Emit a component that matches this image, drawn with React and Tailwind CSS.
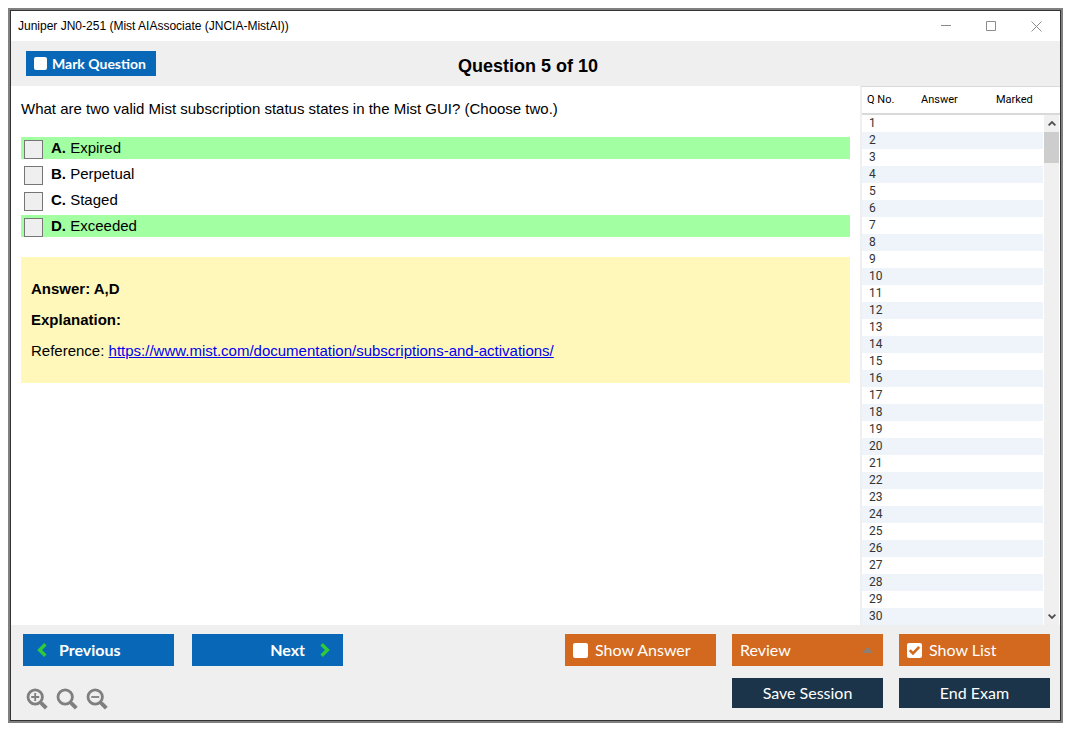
import { useState } from 'react';

const options = [
  { letter: 'A', text: 'Expired', correct: true },
  { letter: 'B', text: 'Perpetual', correct: false },
  { letter: 'C', text: 'Staged', correct: false },
  { letter: 'D', text: 'Exceeded', correct: true },
];

const rows = Array.from({ length: 30 }, (_, i) => i + 1);

const WindowButtons = () => (
  <div className="flex items-center gap-[35px] pr-[18px] text-[#8c8c8c]">
    <button type="button" aria-label="Minimize">
      <svg width="10" height="10" viewBox="0 0 10 10" stroke="currentColor"><path d="M0 4.5h10" /></svg>
    </button>
    <button type="button" aria-label="Maximize">
      <svg width="10" height="10" viewBox="0 0 10 10" fill="none" stroke="currentColor"><path d="M.5.5h9v9h-9z" /></svg>
    </button>
    <button type="button" aria-label="Close">
      <svg width="11" height="11" viewBox="0 0 11 11" stroke="currentColor"><path d="M.5.5l10 10M10.5.5l-10 10" /></svg>
    </button>
  </div>
);

const CheckButton = ({ label, className, boxClass, checked, onChange }) => (
  <label className={`flex items-center ${className}`}>
    <span className="grid place-items-center">
      <input
        type="checkbox"
        checked={checked}
        onChange={(e) => onChange(e.target.checked)}
        className={`col-start-1 row-start-1 appearance-none rounded-xs bg-white ${boxClass}`}
      />
      {checked && (
        <svg className="pointer-events-none col-start-1 row-start-1" width="11" height="9" viewBox="0 0 11 9" fill="none" stroke="#d2691e" strokeWidth="2.6">
          <path d="M.8 4.2l3.2 3.2L10.2 1" />
        </svg>
      )}
    </span>
    {label}
  </label>
);

const ZoomButton = ({ label, mark }) => (
  <button type="button" aria-label={label} className="text-[#7f7f7f]">
    <svg width="22" height="22" viewBox="0 0 22 22" fill="none" stroke="currentColor">
      <circle cx="9.2" cy="9" r="7.2" strokeWidth="2.8" />
      <path d="M14.2 14l1.6 1.6" strokeWidth="2.6" />
      <path d="M15.3 15.1l5 5" strokeWidth="4" />
      {mark && <path d={mark} strokeWidth="1.8" />}
    </svg>
  </button>
);

const Question = () => (
  <main className="flex-1 px-[10px] pt-[14px] text-[15px] leading-[18px]">
    <p>What are two valid Mist subscription status states in the Mist GUI? (Choose two.)</p>
    <div className="mt-[19px] flex flex-col gap-1">
      {options.map((o) => (
        <label key={o.letter} className={`flex h-[22px] items-start pl-[3px] ${o.correct ? 'bg-[#a2ffa2]' : ''}`}>
          <input type="checkbox" className="mt-[3px] mr-2 size-[19px] appearance-none border border-[#767676] bg-[#efefef] checked:bg-[#767676]" />
          <span className="pt-[2px]">
            <b>{o.letter}.</b> {o.text}
          </span>
        </label>
      ))}
    </div>
    <section className="mt-5 flex flex-col gap-[13px] bg-[#fff8ba] px-[10px] py-[23px]">
      <p className="font-bold">Answer: A,D</p>
      <p className="font-bold">Explanation:</p>
      <p>
        Reference:{' '}
        <a href="https://www.mist.com/documentation/subscriptions-and-activations/" className="text-[#0000ee] underline">
          https://www.mist.com/documentation/subscriptions-and-activations/
        </a>
      </p>
    </section>
  </main>
);

const QuestionList = () => (
  <aside className="relative w-[200px] shrink-0 border-t border-l-2 border-t-[#d9d9d9] border-l-[#efefef] font-['Roboto',sans-serif] text-[#333]">
    <table className="w-full table-fixed border-collapse text-[11px]">
      <thead>
        <tr className="h-[27px] border-b-2 border-[#d9d9d9] text-left text-black">
          <th className="w-[59px] pl-[5px] font-normal">Q No.</th>
          <th className="w-[75px] font-normal">Answer</th>
          <th className="font-normal">Marked</th>
        </tr>
      </thead>
      <tbody className="text-xs leading-[17px]">
        {rows.map((n) => (
          <tr key={n} className="h-[17px] even:bg-[#eef4f9]">
            <td className="p-0 pl-[7px]">{n}</td>
            <td className="p-0" />
            <td className="p-0" />
          </tr>
        ))}
      </tbody>
    </table>
    {/* Scrollbar */}
    <div className="absolute top-[28px] right-0 bottom-0 flex w-[17px] flex-col items-center border-r border-l border-white bg-[#f0f0f0] text-[#505050]">
      <svg className="my-[6px]" width="8" height="5" viewBox="0 0 8 5" fill="none" stroke="currentColor" strokeWidth="1.8"><path d="M.6 4.4L4 1l3.4 3.4" /></svg>
      <div className="h-[31px] w-full bg-[#cdcdcd]" />
      <svg className="mt-auto mb-[6px]" width="8" height="5" viewBox="0 0 8 5" fill="none" stroke="currentColor" strokeWidth="1.8"><path d="M.6.6L4 4 7.4.6" /></svg>
    </div>
  </aside>
);

const Footer = ({ showAnswer, setShowAnswer, showList, setShowList }) => (
  <footer className="flex justify-between bg-[#efefef] pt-[9px] pr-[10px] pb-[10px] pl-3 font-['Lato',sans-serif] text-base text-white">
    <div>
      <div className="flex gap-[18px] font-bold">
        <button type="button" className="flex h-8 w-[151px] items-center gap-3 bg-[#0868b7] pl-[14px]">
          <svg width="10" height="14" viewBox="0 0 10 14" fill="none" stroke="#2fcb3a" strokeWidth="3.4"><path d="M8.4 1.2L2.6 7l5.8 5.8" /></svg>
          Previous
        </button>
        <button type="button" className="flex h-8 w-[151px] items-center justify-end gap-[15px] bg-[#0868b7] pr-[13px]">
          Next
          <svg width="10" height="14" viewBox="0 0 10 14" fill="none" stroke="#2fcb3a" strokeWidth="3.4"><path d="M1.6 1.2L7.4 7l-5.8 5.8" /></svg>
        </button>
      </div>
      <div className="mt-[22px] flex gap-2 pl-[3px]">
        <ZoomButton label="Zoom in" mark="M9.2 5v8M5.2 9h8" />
        <ZoomButton label="Reset zoom" />
        <ZoomButton label="Zoom out" mark="M5.2 9h8" />
      </div>
    </div>
    <div className="grid grid-cols-3 content-start gap-x-4 gap-y-3">
      <CheckButton label="Show Answer" className="h-8 w-[151px] gap-[7px] bg-[#d2691e] pl-2" boxClass="size-[15px]" checked={showAnswer} onChange={setShowAnswer} />
      <button type="button" aria-haspopup="menu" className="flex h-8 w-[151px] items-center justify-between bg-[#d2691e] pr-[10px] pl-2">
        Review
        <svg width="11" height="6" viewBox="0 0 11 6" fill="#8a8078"><path d="M5.5 0L11 6H0z" /></svg>
      </button>
      <CheckButton label="Show List" className="h-8 w-[151px] gap-[7px] bg-[#d2691e] pl-2" boxClass="size-[15px]" checked={showList} onChange={setShowList} />
      <button type="button" className="col-start-2 h-[30px] bg-[#1b344a]">Save Session</button>
      <button type="button" className="h-[30px] bg-[#1b344a]">End Exam</button>
    </div>
  </footer>
);

const App = () => {
  const [marked, setMarked] = useState(false);
  const [showAnswer, setShowAnswer] = useState(false);
  const [showList, setShowList] = useState(true);

  return (
    <div className="flex min-h-screen bg-white pt-2 pr-3 pb-3 pl-2 font-['Liberation_Sans',Arial,sans-serif] text-black">
      <div className="flex flex-1 border-2 border-[#808080]">
        <div className="flex flex-1 flex-col border border-[#333]">
          <header className="flex h-[30px] items-center justify-between pl-[7px] text-xs">
            <span>Juniper JN0-251 (Mist AIAssociate (JNCIA-MistAI))</span>
            <WindowButtons />
          </header>
          <div className="grid h-[45px] grid-cols-[1fr_auto_1fr] items-center bg-[#efefef] pr-[30px] pl-[15px]">
            <CheckButton
              label="Mark Question"
              className="h-[25px] w-[130px] gap-[5px] bg-[#0868b7] pl-2 font-['Lato',sans-serif] text-sm font-bold text-white"
              boxClass="size-[13px]"
              checked={marked}
              onChange={setMarked}
            />
            <h1 className="pt-1 text-lg font-bold">Question 5 of 10</h1>
          </div>
          <div className="flex flex-1">
            <Question />
            {showList && <QuestionList />}
          </div>
          <Footer showAnswer={showAnswer} setShowAnswer={setShowAnswer} showList={showList} setShowList={setShowList} />
        </div>
      </div>
    </div>
  );
};

export default App;
